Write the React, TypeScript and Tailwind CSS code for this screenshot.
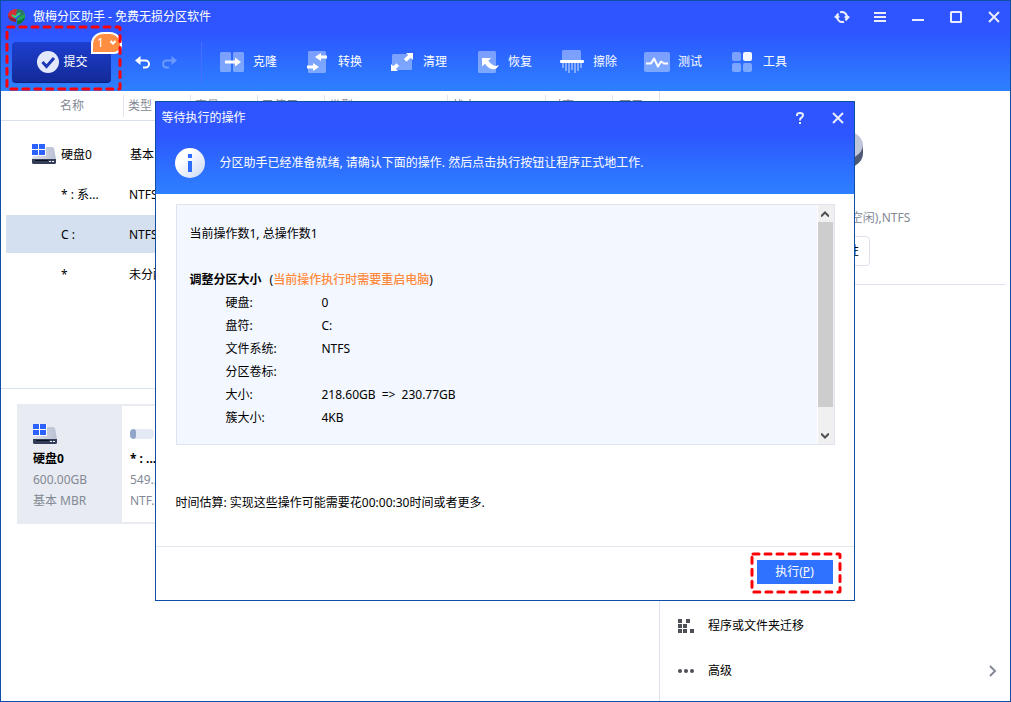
import type { ReactNode } from 'react'

type Tool = { label: string; icon: ReactNode }

const TOOLS: Tool[] = [
  {
    label: '克隆',
    icon: (
      <>
        <rect x="1" y="3" width="11" height="20" rx="1.5" fill="#fff" fillOpacity=".38" />
        <rect x="14" y="3" width="11" height="20" rx="1.5" fill="#fff" fillOpacity=".38" />
        <path d="M6 11.5h10V8.5l6 4.5-6 4.5v-3H6z" fill="#fff" />
      </>
    ),
  },
  {
    label: '转换',
    icon: (
      <>
        <rect x="4" y="2" width="18" height="22" rx="1.5" fill="#fff" fillOpacity=".38" />
        <path d="M23 6.500v3h-6v2.500L11 8l6-4v2.500zM3 16.500v3h6V22l6-4-6-4v2.500z" fill="#fff" />
      </>
    ),
  },
  {
    label: '清理',
    icon: (
      <>
        <rect x="3" y="5" width="20" height="16" rx="1.5" fill="#fff" fillOpacity=".38" />
        <path d="M17 4h7v7l-2.300-2.300-4.200 4-2.600-2.600 4.300-4zM9 22H2v-7l2.300 2.300 3.200-3 2.600 2.600-3.300 3z" fill="#fff" />
      </>
    ),
  },
  {
    label: '恢复',
    icon: (
      <>
        <rect x="4" y="2" width="18" height="22" rx="1.5" fill="#fff" fillOpacity=".38" />
        <path d="M8 9h9l-2.600 2.700c2 2.600 4.500 5 7.600 5.300l3-1c-1.500 3-3.500 4.500-6 4.300-3.500-.4-6-2.800-8-5.600L8 17.500z" fill="#fff" />
      </>
    ),
  },
  {
    label: '擦除',
    icon: (
      <>
        <path d="M3 11V2.500Q3 1 4.500 1h16q1.500 0 1.500 1.500V11z" fill="#fff" fillOpacity=".38" />
        <rect x="1" y="11" width="24" height="3" rx="1" fill="#fff" />
        <path d="M4 14v5M7 14v8M10 14v10M13 14v7M16 14v10M19 14v8M22 14v5" stroke="#fff" strokeOpacity=".5" strokeWidth="1.600" />
      </>
    ),
  },
  {
    label: '测试',
    icon: (
      <>
        <rect x="0" y="3" width="26" height="20" rx="2" fill="#fff" fillOpacity=".38" />
        <path d="M2 14.500h5l3-5 4 8 3-5 3 2h4" fill="none" stroke="#fff" strokeWidth="2" strokeLinejoin="round" />
      </>
    ),
  },
  {
    label: '工具',
    icon: (
      <>
        <rect x="3" y="3" width="9" height="9" rx="2" fill="#fff" fillOpacity=".38" />
        <rect x="14" y="3" width="9" height="9" rx="2" fill="#fff" fillOpacity=".95" />
        <rect x="3" y="14" width="9" height="9" rx="2" fill="#fff" fillOpacity=".38" />
        <rect x="14" y="14" width="9" height="9" rx="2" fill="#fff" fillOpacity=".38" />
      </>
    ),
  },
]

const DETAILS: { term: string; value: ReactNode }[] = [
  { term: '硬盘:', value: '0' },
  { term: '盘符:', value: 'C:' },
  { term: '文件系统:', value: 'NTFS' },
  { term: '分区卷标:', value: '' },
  {
    term: '大小:',
    value: (
      <>
        218.60GB <span className="mx-[3px]">=&gt;</span> 230.77GB
      </>
    ),
  },
  { term: '簇大小:', value: '4KB' },
]

const ROWS = [
  { name: '* : 系...', type: 'NTFS', selected: false },
  { name: 'C :', type: 'NTFS', selected: true },
  { name: '*', type: '未分配', selected: false },
]

function DiskIcon() {
  return (
    <svg width="24" height="20" viewBox="0 0 24 20" className="shrink-0">
      <defs>
        <linearGradient id="diskTop" x1="0" y1="0" x2="1" y2="0">
          <stop offset="0" stopColor="#dfe2ea" />
          <stop offset="1" stopColor="#b9bfd3" />
        </linearGradient>
      </defs>
      <path d="M3 3h17q1.500 0 2 1.500L24 15H0z" fill="url(#diskTop)" />
      <path d="M0 15h24v3.500q0 1.500-1.500 1.500h-21Q0 20 0 18.500z" fill="#343e58" />
      <path d="M3 16h13v1H3z" fill="#0d1222" />
      <path d="M17 17h2v1h-2zM20 17h2v1h-2z" fill="#fff" />
      <path d="M0 0h14v12H0z" fill="#fff" />
      <path d="M0 0h6v5H0zM7 0h6v5H7zM0 6h6v5H0zM7 6h6v5H7z" fill="#2e62ff" />
    </svg>
  )
}

/* red dashed marker drawn round a button */
function Marker({ className }: { className: string }) {
  return (
    <svg className={`pointer-events-none absolute overflow-visible ${className}`} aria-hidden="true">
      <rect width="100%" height="100%" rx="1" fill="none" stroke="#fb0007" strokeWidth="3" strokeLinecap="round" strokeDasharray="6 6" />
    </svg>
  )
}

function CloseIcon() {
  return (
    <svg width="12" height="12" viewBox="0 0 12 12" stroke="#e9edff" strokeWidth="2">
      <path d="M1 1l10 10M11 1L1 11" />
    </svg>
  )
}

function TitleBar() {
  return (
    <div className="flex h-8 items-center pl-1.5 pr-px">
      <svg width="20" height="16" viewBox="0 0 20 16">
        <path d="M1 5Q3 0 10 0v5l-3 3 2 5Q0 12 1 5z" fill="#d4303b" />
        <path d="M1 7Q2 12 9 13v-3Q4 9 1 7z" fill="#8c2238" />
        <path d="M10 0q7 0 8 5l-4 3-3-3H9z" fill="#2d7a63" />
        <path d="M10 9l8-4q2 7-8 11z" fill="#23a455" />
        <path d="M10 12q5-1 8-4-1 6-8 8z" fill="#12763b" />
        <path d="M5 6l3 2 5-4" fill="none" stroke="#35d27c" strokeWidth="2" />
      </svg>
      <h1 className="ml-1.5 flex-1 text-xs text-white">傲梅分区助手 - 免费无损分区软件</h1>
      <div className="flex gap-2">
        <button aria-label="刷新" className="flex size-[30px] items-center justify-center">
          <svg width="16" height="12" viewBox="0 0 16 12" fill="none" stroke="#e9edff" strokeWidth="2">
            <path d="M3 6a5 5 0 0 1 1.500-3.500M6 1.300a5 5 0 0 1 6.800 4M13 6a5 5 0 0 1-1.500 3.500M10 10.700a5 5 0 0 1-6.800-4" />
            <path d="M0 6l3-3 3 3-3 2zM10 6l3 3 3-3-3-2z" fill="#e9edff" stroke="none" />
          </svg>
        </button>
        <button aria-label="菜单" className="flex size-[30px] items-center justify-center">
          <svg width="12" height="10" viewBox="0 0 12 10" fill="#e9edff">
            <path d="M0 0h12v2H0zM0 4h12v2H0zM0 8h12v2H0z" />
          </svg>
        </button>
        <button aria-label="最小化" className="flex size-[30px] items-center justify-center">
          <svg width="12" height="10" viewBox="0 0 12 10" fill="#e9edff">
            <path d="M0 7h12v2H0z" />
          </svg>
        </button>
        <button aria-label="最大化" className="flex size-[30px] items-center justify-center">
          <svg width="12" height="12" viewBox="0 0 12 12" fill="none" stroke="#e9edff" strokeWidth="2">
            <rect x="1" y="1" width="10" height="10" rx=".5" />
          </svg>
        </button>
        <button aria-label="关闭" className="flex size-[30px] items-center justify-center">
          <CloseIcon />
        </button>
      </div>
    </div>
  )
}

function Toolbar() {
  return (
    <div className="flex h-[58px] items-center pl-[11px]">
      <div className="relative">
        <button className="flex h-[41px] w-[99px] items-center justify-center gap-1 rounded border-b border-[#0c1d80] bg-linear-to-b from-[#1d3fd0] to-[#132a98] pl-0.5 text-xs text-white">
          <svg width="22" height="22" viewBox="0 0 22 22">
            <circle cx="11" cy="11" r="11" fill="#e3e8fb" />
            <path d="M5.500 11l4 4.500 7.500-8.500" fill="none" stroke="#1a38b8" strokeWidth="3" />
          </svg>
          提交
        </button>
        <span className="absolute -top-[10px] left-[79px] flex h-[22px] w-[31px] items-center justify-center gap-1.5 rounded-br-lg rounded-tl-xl rounded-tr-xl border-2 border-white bg-[#ff8d42] text-xs text-white">
          1
          <svg width="6" height="5" viewBox="0 0 6 5" fill="none" stroke="#fff" strokeWidth="2">
            <path d="M.5 1L3 3.500 5.500 1" />
          </svg>
        </span>
        <Marker className="-left-[5px] -top-[15px] h-[62px] w-[113px]" />
      </div>
      <div className="ml-6 flex gap-3">
        <button aria-label="撤销">
          <svg width="15" height="13" viewBox="0 0 15 13" fill="none" stroke="#fff" strokeWidth="2">
            <path d="M3 4.500h7.500a3.500 3.500 0 0 1 0 7H8" />
            <path d="M5.500 0v9L0 4.500z" fill="#fff" stroke="none" />
          </svg>
        </button>
        <button aria-label="重做" className="opacity-30">
          <svg width="15" height="13" viewBox="0 0 15 13" fill="none" stroke="#fff" strokeWidth="2">
            <path d="M12 4.500H4.500a3.500 3.500 0 0 0 0 7H7" />
            <path d="M9.500 0v9L15 4.500z" fill="#fff" stroke="none" />
          </svg>
        </button>
      </div>
      <span className="ml-6 h-10 w-px bg-[#4a6dff]" />
      <nav className="ml-[17px] flex gap-[27px]">
        {TOOLS.map(({ label, icon }) => (
          <button key={label} className="flex items-center gap-2 text-xs text-white">
            <svg width="26" height="26" viewBox="0 0 26 26">{icon}</svg>
            {label}
          </button>
        ))}
      </nav>
    </div>
  )
}

function HeadCell({ children, className }: { children?: ReactNode; className: string }) {
  return (
    <th className={`border-b border-[#d9e0ec] p-0 text-left font-normal ${className}`}>
      <div className="flex h-[22px] items-center border-r border-[#e0e4ee] pl-1">{children}</div>
    </th>
  )
}

function PartitionTable() {
  const cell = 'h-10 border-b-2 border-transparent bg-clip-padding p-0 pt-0.5'
  return (
    <table className="w-full table-fixed border-separate border-spacing-0 text-xs">
      <thead className="text-[#838995]">
        <tr className="h-[30px]">
          <th className="w-[123px] border-b border-[#d9e0ec] p-0 text-left font-normal">
            <div className="flex h-[22px] items-center border-r border-[#e0e4ee] pl-[59px]">名称</div>
          </th>
          <HeadCell className="w-[67px]">类型</HeadCell>
          <HeadCell className="w-[67px]">容量</HeadCell>
          <HeadCell className="w-[67px]">已使用</HeadCell>
          <HeadCell className="w-[123px]">类型</HeadCell>
          <HeadCell className="w-[98px]">状态</HeadCell>
          <HeadCell className="w-[67px]">对齐</HeadCell>
          <th className="border-b border-[#d9e0ec] p-0 pl-1.5 text-left font-normal">可用</th>
        </tr>
      </thead>
      <tbody>
        <tr>
          <td className="h-[54px] p-0 pl-[31px] pt-3">
            <div className="flex items-center gap-[5px]">
              <DiskIcon />
              <span className="pt-0.5">硬盘0</span>
            </div>
          </td>
          <td className="p-0 pl-1.5 pt-3.5">基本</td>
          <td colSpan={6} />
        </tr>
        {ROWS.map(({ name, type, selected }) => (
          <tr key={name} className={selected ? '[&>td]:bg-[#d4dfef]' : ''}>
            <td className={`${cell} border-l-[5px] pl-[55px]`}>{name}</td>
            <td className={`${cell} pl-[5px]`}>{type}</td>
            <td colSpan={6} className={cell} />
          </tr>
        ))}
      </tbody>
    </table>
  )
}

function DiskMap() {
  return (
    <section className="border-t border-[#d9e0f0] px-4 pt-[15px]">
      <div className="flex h-[120px] bg-[#e8ebf2] text-xs">
        <div className="w-[105px] pl-4 pt-5">
          <DiskIcon />
          <div className="mt-1 leading-[21px] text-[#838995]">
            <p className="font-bold text-black">硬盘0</p>
            <p>600.00GB</p>
            <p>基本 MBR</p>
          </div>
        </div>
        <div className="my-0.5 w-10 overflow-hidden bg-white pl-2 pt-[23px]">
          <div className="h-2.5 w-6 overflow-hidden rounded-sm bg-[#e3eaf6]">
            <div className="h-full w-1.5 rounded-sm bg-[#91a5c8]" />
          </div>
          <div className="mt-[9px] whitespace-nowrap leading-[21px] text-[#838995]">
            <p className="font-bold text-black">* : ...</p>
            <p>549...</p>
            <p>NTF...</p>
          </div>
        </div>
      </div>
    </section>
  )
}

function SidePane() {
  return (
    <aside className="flex w-[351px] shrink-0 flex-col border-l border-[#dfe2ee] text-xs">
      <div className="flex h-[193px] flex-col items-center pt-[37px]">
        <svg width="56" height="44" viewBox="0 0 56 44">
          <path d="M0 17v9a28 17 0 0 0 56 0v-9z" fill="#4f5a76" />
          <ellipse cx="28" cy="17" rx="28" ry="17" fill="#c0c6da" />
        </svg>
        <p className="mt-9 leading-5 text-[#838995]">218.6GB(92.6GB空闲),NTFS</p>
        <button className="mt-2 h-[30px] w-[70px] rounded border border-[#dde1ee]">查看属性</button>
      </div>
      <hr className="mr-1 border-[#dfe2ee]" />
      <div className="mt-auto pb-2">
        <button className="flex h-[45px] w-full items-center gap-3.5 pl-[18px]">
          <svg width="16" height="14" viewBox="0 0 16 14" fill="#4e5057">
            <path d="M0 0h4v4H0zM8 0h4v4H8zM0 5h4v4H0zM5 5h4v4H5zM0 10h4v4H0zM5 10h4v4H5zM12 10h4v4h-4z" />
          </svg>
          程序或文件夹迁移
        </button>
        <button className="flex h-[45px] w-full items-center gap-3.5 pl-[18px] pr-[13px]">
          <svg width="16" height="4" viewBox="0 0 16 4" fill="#4e5057">
            <circle cx="2" cy="2" r="2" />
            <circle cx="8" cy="2" r="2" />
            <circle cx="14" cy="2" r="2" />
          </svg>
          高级
          <svg width="8" height="12" viewBox="0 0 8 12" fill="none" stroke="#858a96" strokeWidth="2" className="ml-auto">
            <path d="M1 1l5 5-5 5" />
          </svg>
        </button>
      </div>
    </aside>
  )
}

function PendingDialog() {
  return (
    <div role="dialog" aria-labelledby="dialog-title" className="flex h-[500px] w-[700px] flex-col border border-[#0f4ea5] bg-white text-xs">
      <header className="h-[92px] bg-linear-to-b from-[#2e55ff] from-35% to-[#2e80ff] text-white">
        <div className="flex h-8 items-center pl-1.5 pr-px">
          <h2 id="dialog-title" className="flex-1">等待执行的操作</h2>
          <div className="flex gap-2">
            <button aria-label="帮助" className="flex size-[30px] items-center justify-center">
              <svg width="10" height="12" viewBox="0 0 10 12" fill="none" stroke="#e9edff" strokeWidth="2">
                <path d="M2 4V3q0-2 3-2t3 2.200Q8 5 6 6 5 6.500 5 8.500M5 10v2" />
              </svg>
            </button>
            <button aria-label="关闭" className="flex size-[30px] items-center justify-center">
              <CloseIcon />
            </button>
          </div>
        </div>
        <div className="mt-3.5 flex items-center gap-[15px] pl-[19px]">
          <svg width="30" height="30" viewBox="0 0 30 30">
            <defs>
              <linearGradient id="infoFill" x1="0" y1="0" x2="1" y2="1">
                <stop offset=".3" stopColor="#fff" />
                <stop offset="1" stopColor="#c8d6f5" />
              </linearGradient>
            </defs>
            <circle cx="15" cy="15" r="15" fill="url(#infoFill)" />
            <path d="M13 6h4v4h-4zM13 13h4v11h-4z" fill="#2e6cff" />
          </svg>
          <p>分区助手已经准备就绪, 请确认下面的操作. 然后点击执行按钮让程序正式地工作.</p>
        </div>
      </header>

      <div className="ml-5 mr-[19px] mt-2.5 flex h-[241px] border border-[#dfe3ee] bg-[#f3f7ff]">
        <div className="flex-1 pl-[13px] pt-[17px] leading-[23px]">
          <p>当前操作数1, 总操作数1</p>
          <p className="mt-[23px]">
            <b>调整分区大小</b>
            <span className="ml-2">(</span>
            <span className="font-medium text-[#ff8a3c]">当前操作执行时需要重启电脑</span>)
          </p>
          <dl className="grid grid-cols-[96px_1fr] pl-9">
            {DETAILS.map(({ term, value }) => (
              <div key={term} className="contents">
                <dt>{term}</dt>
                <dd>{value}</dd>
              </div>
            ))}
          </dl>
        </div>
        <div className="flex w-[17px] flex-col items-center border-l border-white bg-[#f0f0f0] pr-px">
          <button aria-label="向上滚动" className="flex h-[17px] items-center">
            <svg width="8" height="6" viewBox="0 0 8 6" fill="none" stroke="#505050" strokeWidth="2">
              <path d="M0 5.500l4-4 4 4" />
            </svg>
          </button>
          <div className="h-[185px] w-full bg-[#cdcdcd]" />
          <button aria-label="向下滚动" className="mt-auto flex h-[17px] items-center">
            <svg width="8" height="6" viewBox="0 0 8 6" fill="none" stroke="#505050" strokeWidth="2">
              <path d="M0 .5l4 4 4-4" />
            </svg>
          </button>
        </div>
      </div>

      <p className="mt-12 px-5 leading-5">时间估算: 实现这些操作可能需要花00:00:30时间或者更多.</p>

      <footer className="mt-auto flex h-[54px] justify-end border-t border-[#e2e8f0] pr-[21px] pt-[13px]">
        <div className="relative h-6">
          <button className="h-6 w-[76px] bg-[#2e72ff] text-white">
            执行(<u>P</u>)
          </button>
          <Marker className="-left-[5px] -top-[6px] h-[38px] w-[88px]" />
        </div>
      </footer>
    </div>
  )
}

export default function App() {
  return (
    <div className="relative flex min-h-screen flex-col border border-[#0f4ea5] bg-white font-['Noto_Sans','Noto_Sans_CJK_SC',sans-serif] text-black">
      <header className="bg-linear-to-b from-[#2e55ff] from-35% to-[#2e80ff]">
        <TitleBar />
        <Toolbar />
      </header>
      <main className="flex flex-1">
        <div className="flex min-w-0 flex-1 flex-col">
          <div className="h-[297px]">
            <PartitionTable />
          </div>
          <DiskMap />
        </div>
        <SidePane />
      </main>
      <div className="absolute inset-0 flex items-center justify-center pr-0.5">
        <PendingDialog />
      </div>
    </div>
  )
}
